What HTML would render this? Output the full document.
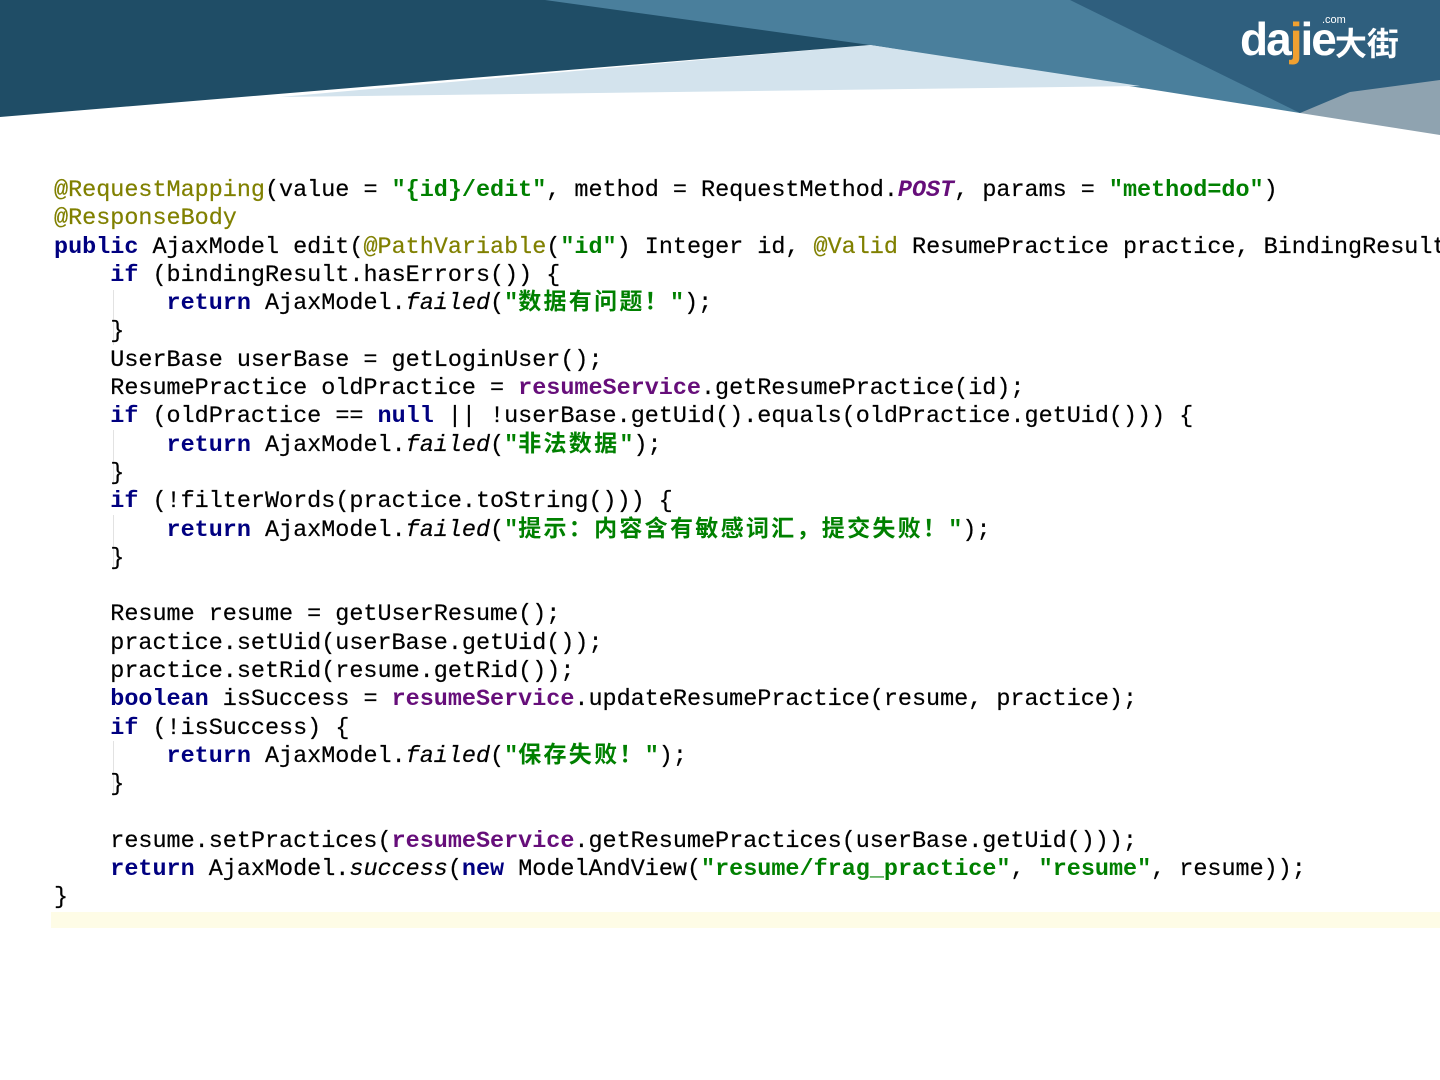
<!DOCTYPE html>
<html><head><meta charset="utf-8"><style>
body{margin:0;width:1440px;height:1080px;background:#fff;position:relative;overflow:hidden}
svg.bg{position:absolute;left:0;top:0}
.logo{position:absolute;left:1240px;top:12px;color:#fff;font:bold 46px "Liberation Sans",sans-serif;letter-spacing:-2px}
.logo .cn{font:bold 32px "Noto Sans CJK SC",sans-serif;letter-spacing:0}
.logo .com{position:absolute;left:82px;top:2px;font-size:11px;font-weight:normal;letter-spacing:0}
.bar{position:absolute;left:51px;top:912px;width:1389px;height:16px;background:#fefce6}
.guide{position:absolute;width:1px;background:#e2e2e2}
pre{position:absolute;left:54px;top:177px;width:1386px;overflow:hidden;margin:0;font:23.45px/28.3px "Liberation Mono","Courier New",monospace;color:#000;-webkit-text-stroke:0.2px #000;white-space:pre}
.a{color:#808000;-webkit-text-stroke:0.2px #808000}
.s{color:#008000;font-weight:bold;-webkit-text-stroke:0}
.k{color:#000080;font-weight:bold;-webkit-text-stroke:0}
.f{color:#660e7a;font-weight:bold;-webkit-text-stroke:0}
.i{font-style:italic}
.cj{font-family:"Noto Sans CJK SC",sans-serif;font-size:23px;line-height:0;font-weight:bold;letter-spacing:2.3px}
</style></head><body>
<svg class="bg" width="1440" height="150">
<polygon points="0,0 1440,0 1440,90 1300,113 870,45" fill="#4a7f9c"/>
<polygon points="1070,0 1440,0 1440,95 1300,113" fill="#2f5f7e"/>
<polygon points="870,45 1140,86 280,97" fill="#d3e3ed"/>
<polygon points="0,0 545,0 870,45 0,117" fill="#1f4d66"/>
<polygon points="1300,113 1350,92 1440,80 1440,135" fill="#8fa3b0"/>
</svg>
<div class="logo">da<span style="color:#f0a030">j</span>ie<span class="cn">大街</span><span class="com">.com</span></div>
<div class="guide" style="left:113px;top:290px;height:55px"></div>
<div class="guide" style="left:113px;top:430px;height:55px"></div>
<div class="guide" style="left:113px;top:515px;height:55px"></div>
<div class="guide" style="left:113px;top:741px;height:55px"></div>
<div class="bar"></div>
<pre><span class="a">@RequestMapping</span>(value = <span class="s">"{id}/edit"</span>, method = RequestMethod.<span class="f i">POST</span>, params = <span class="s">"method=do"</span>)
<span class="a">@ResponseBody</span>
<span class="k">public</span> AjaxModel edit(<span class="a">@PathVariable</span>(<span class="s">"id"</span>) Integer id, <span class="a">@Valid</span> ResumePractice practice, BindingResult bindingResult) {
    <span class="k">if</span> (bindingResult.hasErrors()) {
        <span class="k">return</span> AjaxModel.<span class="i">failed</span>(<span class="s">"<span class="cj">数据有问题！</span>"</span>);
    }
    UserBase userBase = getLoginUser();
    ResumePractice oldPractice = <span class="f">resumeService</span>.getResumePractice(id);
    <span class="k">if</span> (oldPractice == <span class="k">null</span> || !userBase.getUid().equals(oldPractice.getUid())) {
        <span class="k">return</span> AjaxModel.<span class="i">failed</span>(<span class="s">"<span class="cj">非法数据</span>"</span>);
    }
    <span class="k">if</span> (!filterWords(practice.toString())) {
        <span class="k">return</span> AjaxModel.<span class="i">failed</span>(<span class="s">"<span class="cj">提示：内容含有敏感词汇，提交失败！</span>"</span>);
    }

    Resume resume = getUserResume();
    practice.setUid(userBase.getUid());
    practice.setRid(resume.getRid());
    <span class="k">boolean</span> isSuccess = <span class="f">resumeService</span>.updateResumePractice(resume, practice);
    <span class="k">if</span> (!isSuccess) {
        <span class="k">return</span> AjaxModel.<span class="i">failed</span>(<span class="s">"<span class="cj">保存失败！</span>"</span>);
    }

    resume.setPractices(<span class="f">resumeService</span>.getResumePractices(userBase.getUid()));
    <span class="k">return</span> AjaxModel.<span class="i">success</span>(<span class="k">new</span> ModelAndView(<span class="s">"resume/frag_practice"</span>, <span class="s">"resume"</span>, resume));
}</pre>
</body></html>
